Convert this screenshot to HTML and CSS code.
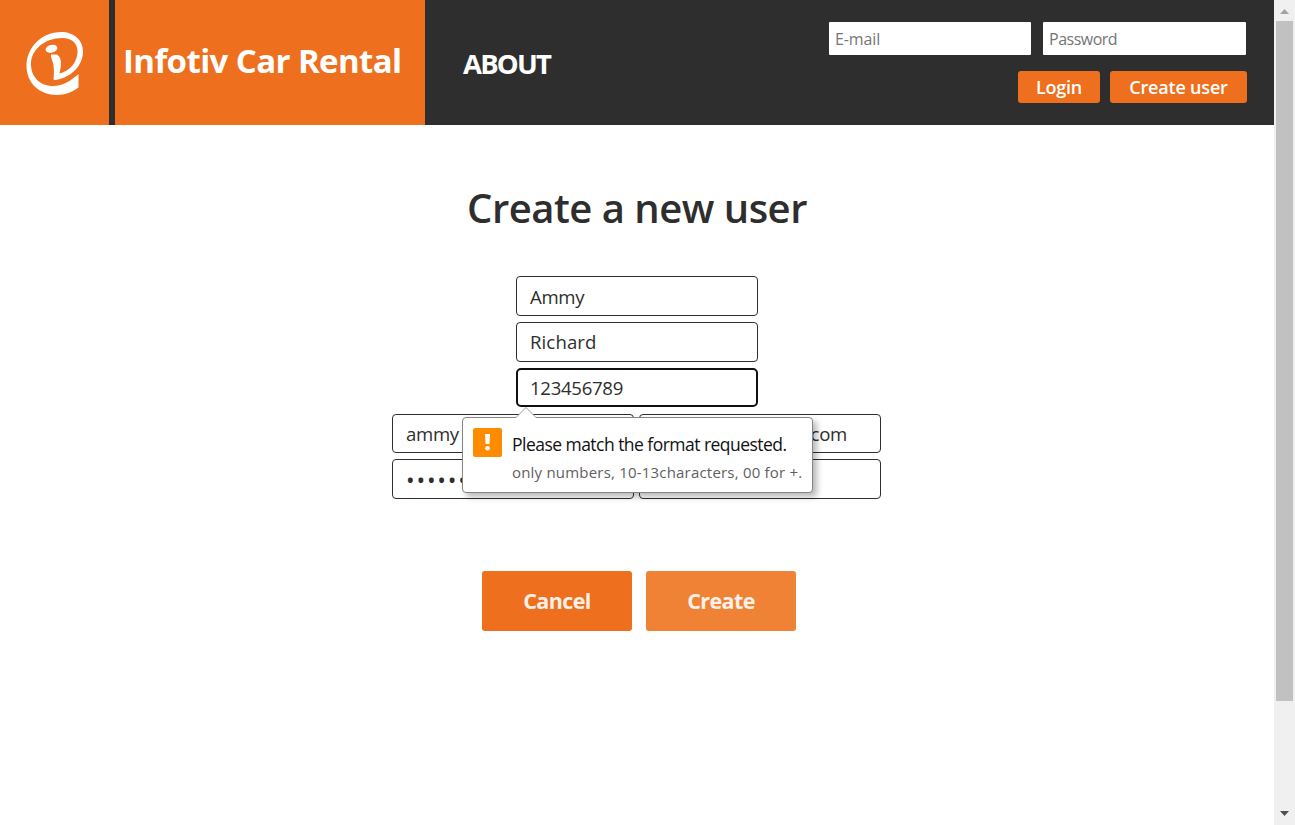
FILE: index.html
```html
<!DOCTYPE html>
<html lang="en">
<head>
<meta charset="utf-8">
<title>Infotiv Car Rental</title>
<link rel="stylesheet" href="styles.css">
</head>
<body>
<div class="page">
  <header class="header">
    <div class="logo">
      <svg width="109" height="125" viewBox="0 0 109 125" aria-label="Infotiv">
        <path fill="#fff" fill-rule="evenodd" d="M78.500 74 L78.500 87.500 C73 92 65 95 57 95 C39 95 26.500 82.500 26.500 66 C26.500 47 42 32 61 32 C74 32 83 40 83 51.500 C83 66 71 77.500 55.500 80 L53.500 79.500 C54.500 71 54 64 51 57 L51 54.500 L57 54.500 C62 58 61.500 64 59.500 73.500 C70 71 77.500 62 77.500 51.500 C77.500 43 71.500 38 62 38 C45 38 31 49.500 31 64 C31 77 40 86 53 86 C63 86 71 80.500 78.500 74Z"/>
        <ellipse cx="51.500" cy="48.800" rx="6" ry="3.900" transform="rotate(-14 51.500 49)" fill="#fff"/>
      </svg>
    </div>
    <div class="brand"><h1 class="brand-name">Infotiv Car Rental</h1></div>
    <a class="about">ABOUT</a>
    <div class="account">
      <div class="credentials">
        <input class="credential" type="text" placeholder="E-mail">
        <input class="credential credential-password" type="text" placeholder="Password">
      </div>
      <div class="account-actions">
        <button class="small-button login">Login</button>
        <button class="small-button create-user">Create user</button>
      </div>
    </div>
  </header>
  <main class="main">
    <h2 class="title">Create a new user</h2>
    <form class="form">
      <div class="field">Ammy</div>
      <div class="field field-last-name">Richard</div>
      <div class="field field-focused">123456789
        <div class="tooltip">
          <svg class="tooltip-arrow" width="20" height="11" viewBox="0 0 20 11"><path d="M0 10.500 L10 .5 L20 10.500V11H0Z" fill="#fff"/><path d="M0 10.500 L10 .5 L20 10.500" fill="none" stroke="#999"/></svg>
          <svg class="warning" width="29" height="29" viewBox="0 0 29 29"><rect width="29" height="29" rx="2" fill="#ff8c00"/><path d="M12 6h5l-.5 10h-4z" fill="#fff"/><circle cx="14.500" cy="20.300" r="2.300" fill="#fff"/></svg>
          <div class="tooltip-text">
            <div class="tooltip-message">Please match the format requested.</div>
            <div class="tooltip-hint">only numbers, 10-13characters, 00 for +.</div>
          </div>
        </div>
      </div>
      <div class="field-row email-row">
        <div class="field">ammy</div>
        <div class="field email-end">com</div>
      </div>
      <div class="field-row">
        <div class="field dots">••••••</div>
        <div class="field"></div>
      </div>
    </form>
    <div class="actions">
      <button class="button">Cancel</button>
      <button class="button button-hover">Create</button>
    </div>
  </main>
</div>
<div class="scrollbar">
  <svg class="scroll-arrow" width="21" height="21" viewBox="0 0 21 21"><path d="M6 14h9l-4.500-5z" fill="#a3a3a3"/></svg>
  <div class="scroll-thumb"></div>
  <svg class="scroll-arrow scroll-down" width="21" height="21" viewBox="0 0 21 21"><path d="M6 7h9l-4.500 5z" fill="#505050"/></svg>
</div>
</body>
</html>
```
FILE: styles.css
```css
* { box-sizing: border-box; }
body {
  margin: 0;
  height: 825px;
  display: flex;
  overflow: hidden;
  background: #fff;
  color: #2e2e2e;
  font-family: "Open Sans", sans-serif;
}
button, input { font-family: inherit; border: 0; margin: 0; }
.page { width: 1274px; }
.header { display: flex; height: 125px; background: #2e2e2e; color: #fff; }
.logo { width: 109px; background: #ee6f1e; }
.brand { width: 310px; margin-left: 6px; padding: 38px 0 0 8px; background: #ee6f1e; }
.brand-name { margin: 0; font-size: 33px; line-height: 46px; font-weight: 700; letter-spacing: -.6px; white-space: nowrap; }
.about { margin-left: 38px; padding-top: 45px; font-size: 27.500px; line-height: 38px; font-weight: 700; letter-spacing: -1.800px; }
.account { margin: 22px 27px 0 auto; }
.credentials { display: flex; gap: 12px; padding-right: 1px; }
.credential { width: 202px; height: 33px; padding: 1px 6px 0; border-radius: 1px; background: #fff; font-size: 16px; letter-spacing: -.1px; }
.credential-password { width: 203px; letter-spacing: -.5px; }
.credential::placeholder { color: #757575; }
.account-actions { display: flex; justify-content: flex-end; gap: 10px; margin-top: 16px; }
.small-button { height: 32px; padding: 0; border-radius: 3px; background: #ee6f1e; color: #fff; font-size: 18px; font-weight: 600; letter-spacing: -.2px; }
.login { width: 82px; }
.create-user { width: 137px; }
.main { display: flex; flex-direction: column; align-items: center; padding-top: 56px; }
.title { margin: 0; font-size: 40px; line-height: 54px; font-weight: 600; letter-spacing: -.5px; white-space: nowrap; }
.form { display: flex; flex-direction: column; align-items: center; gap: 6px; margin-top: 41px; }
.field { width: 242px; height: 40px; padding: 0 13px; border: 1px solid #2e2e2e; border-radius: 4px; font-size: 18.600px; line-height: 39px; letter-spacing: -.3px; white-space: nowrap; }
.field-last-name { line-height: 37px; letter-spacing: .1px; }
.field-focused { position: relative; height: 39px; padding: 0 12px; border: 2px solid #101010; border-radius: 5px; line-height: 36px; }
.field-row { display: flex; gap: 5px; margin: 0 1px 0 0; }
.email-row { margin-top: 1px; }
.email-row .field { height: 39px; line-height: 37px; }
.email-row .email-end { padding-right: 33px; text-align: right; }
.dots { font-size: 23px; line-height: 41px; letter-spacing: 1.800px; }
.tooltip { position: absolute; z-index: 2; left: -56px; top: 47px; display: flex; gap: 10px; width: 351px; height: 76px; padding: 10px; border: 1px solid #858585; border-radius: 4px; background: #fff; box-shadow: 4px 4px 6px rgba(0,0,0,.28); }
.tooltip-arrow { position: absolute; left: 53px; top: -11px; }
.warning { flex: none; }
.tooltip-text { padding-top: 4px; }
.tooltip-message { color: #111; font-size: 17.500px; line-height: 25px; font-weight: 400; letter-spacing: -.53px; }
.tooltip-hint { margin-top: 3px; color: #5f5f5f; font-size: 15px; line-height: 25px; letter-spacing: .2px; }
.actions { display: flex; gap: 14px; margin: 72px 0 0 4px; }
.button { width: 150px; height: 60px; padding: 0 0 2px; border-radius: 3px; background: #ee6f1e; color: #fdf0e8; font-size: 21.500px; font-weight: 700; letter-spacing: -.6px; }
.button-hover { background: #f08236; }
.scrollbar { display: flex; flex-direction: column; width: 21px; background: #f0f0f0; }
.scroll-arrow { display: block; }
.scroll-thumb { width: 17px; height: 680px; margin-left: 2px; background: #c1c1c1; }
.scroll-down { margin-top: auto; }
```
